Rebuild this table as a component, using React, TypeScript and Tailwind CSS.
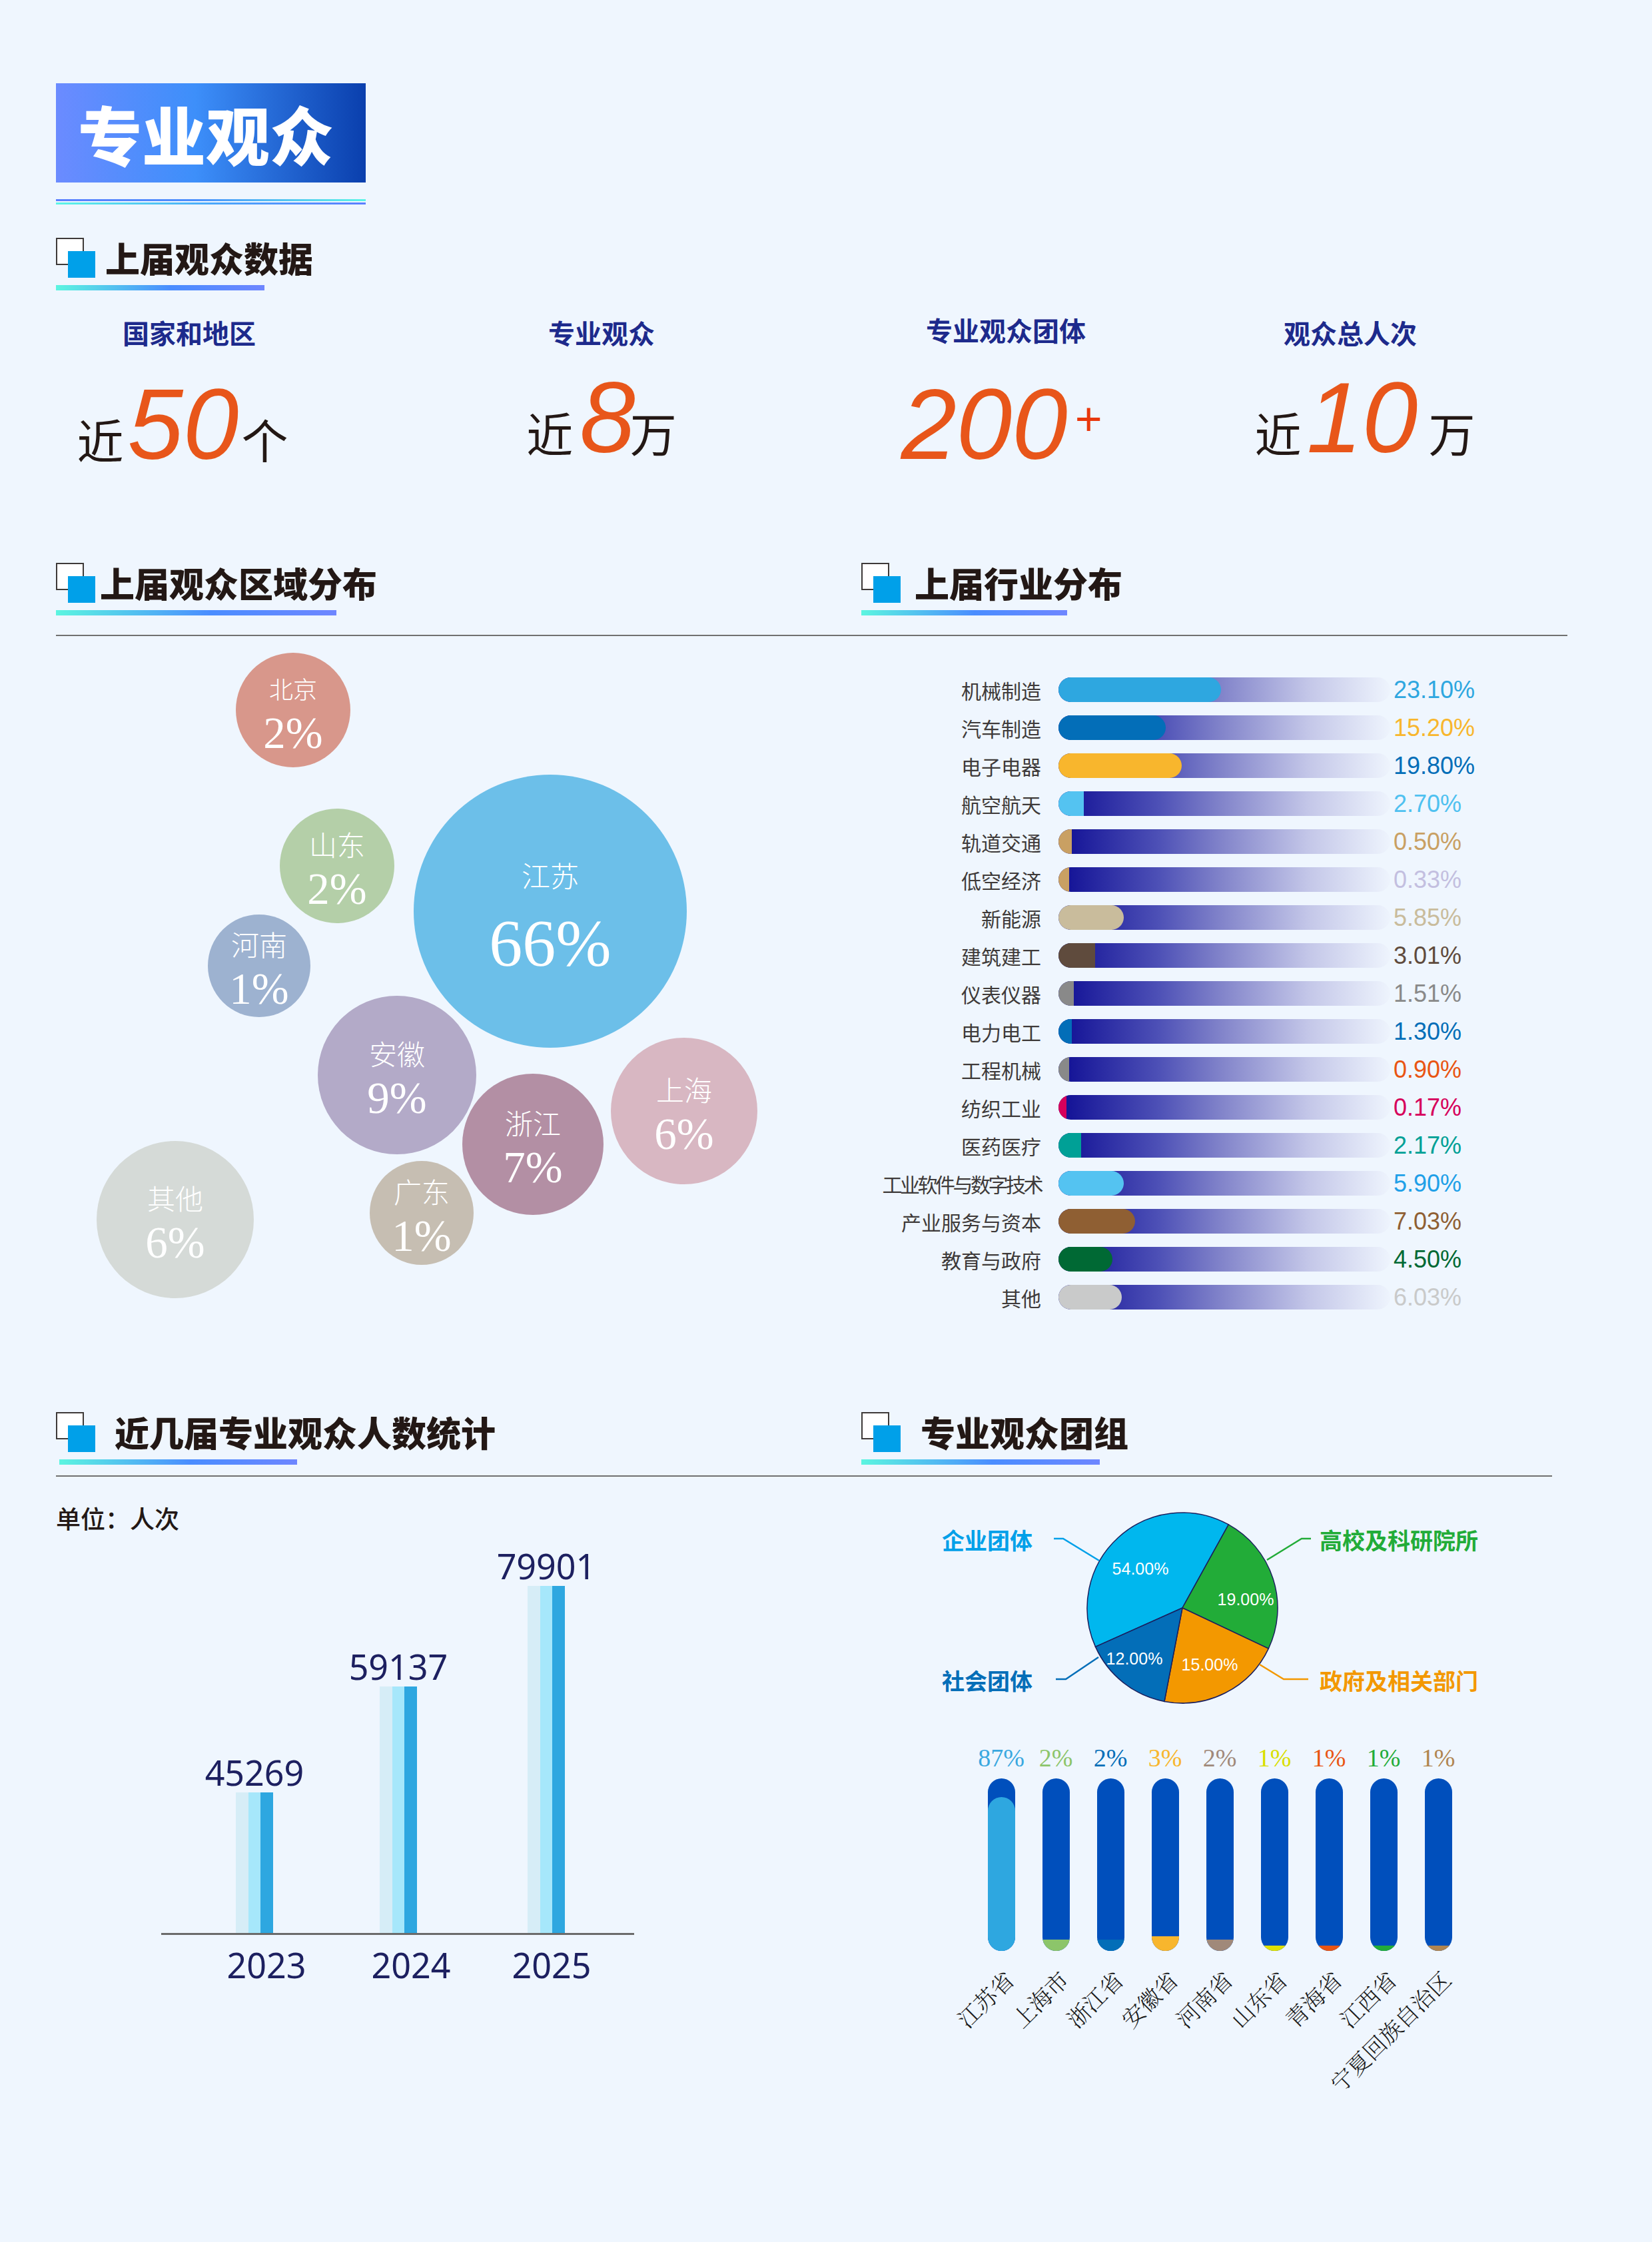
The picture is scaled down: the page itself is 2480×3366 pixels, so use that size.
import React from "react";

// 上届行业分布 rows
const industries = [
  { name: "机械制造", w: 244, fill: "bg-[#2ea7e0]", text: "text-[#2ea7e0]", value: "23.10%" },
  { name: "汽车制造", w: 161, fill: "bg-[#036eb8]", text: "text-[#f8b62d]", value: "15.20%" },
  { name: "电子电器", w: 185, fill: "bg-[#f8b62d]", text: "text-[#036eb8]", value: "19.80%" },
  { name: "航空航天", w: 38, fill: "bg-[#54c3f1]", text: "text-[#4fc1f0]", value: "2.70%" },
  { name: "轨道交通", w: 20, fill: "bg-[#c9a063]", text: "text-[#c9a063]", value: "0.50%" },
  { name: "低空经济", w: 16, fill: "bg-[#c9a063]", text: "text-[#c3bfe0]", value: "0.33%" },
  { name: "新能源", w: 98, fill: "bg-[#c9bc9c]", text: "text-[#c9bc9c]", value: "5.85%" },
  { name: "建筑建工", w: 55, fill: "bg-[#5f4b3d]", text: "text-[#5f4b3d]", value: "3.01%" },
  { name: "仪表仪器", w: 23, fill: "bg-[#898989]", text: "text-[#898989]", value: "1.51%" },
  { name: "电力电工", w: 20, fill: "bg-[#036eb8]", text: "text-[#036eb8]", value: "1.30%" },
  { name: "工程机械", w: 16, fill: "bg-[#898989]", text: "text-[#e95513]", value: "0.90%" },
  { name: "纺织工业", w: 12, fill: "bg-[#d6005b]", text: "text-[#d6005b]", value: "0.17%" },
  { name: "医药医疗", w: 34, fill: "bg-[#00a096]", text: "text-[#00a096]", value: "2.17%" },
  { name: "工业软件与数字技术", w: 98, fill: "bg-[#54c3f1]", text: "text-[#1fa0e8]", value: "5.90%", tight: true },
  { name: "产业服务与资本", w: 115, fill: "bg-[#8f5f33]", text: "text-[#8f5f33]", value: "7.03%" },
  { name: "教育与政府", w: 81, fill: "bg-[#006934]", text: "text-[#006934]", value: "4.50%" },
  { name: "其他", w: 95, fill: "bg-[#c9caca]", text: "text-[#c9caca]", value: "6.03%" },
];

// 区域分布 bubbles, positions relative to the canvas
const bubbles = [
  { name: "北京", pct: "2%", x: 270, y: 25, d: 172, bg: "bg-[#d8978b]", small: true },
  { name: "山东", pct: "2%", x: 336, y: 259, d: 172, bg: "bg-[#b4cfa8]" },
  { name: "河南", pct: "1%", x: 228, y: 418, d: 154, bg: "bg-[#9db2d0]" },
  { name: "安徽", pct: "9%", x: 393, y: 540, d: 238, bg: "bg-[#b3aac8]" },
  { name: "浙江", pct: "7%", x: 610, y: 657, d: 212, bg: "bg-[#b38fa4]" },
  { name: "上海", pct: "6%", x: 833, y: 603, d: 220, bg: "bg-[#d8b7c2]" },
  { name: "广东", pct: "1%", x: 471, y: 788, d: 156, bg: "bg-[#c6beb2]" },
  { name: "其他", pct: "6%", x: 61, y: 758, d: 236, bg: "bg-[#d5dad7]" },
];

// 人数统计 bars
const years = [
  { year: "2023", value: "45269", h: 211, ml: "ml-[40px]" },
  { year: "2024", value: "59137", h: 370, ml: "ml-[16px]" },
  { year: "2025", value: "79901", h: 521, ml: "ml-[22px]" },
];

// 省份团组
const provinces = [
  { name: "江苏省", pct: "87%", text: "text-[#3aa8e0]", fill: "bg-[#2ea7e0] rounded-t-full", h: 231 },
  { name: "上海市", pct: "2%", text: "text-[#8cc56a]", fill: "bg-[#8cc56a]", h: 17 },
  { name: "浙江省", pct: "2%", text: "text-[#036eb8]", fill: "bg-[#036eb8]", h: 17 },
  { name: "安徽省", pct: "3%", text: "text-[#f8b62d]", fill: "bg-[#f8b62d]", h: 22 },
  { name: "河南省", pct: "2%", text: "text-[#a0897a]", fill: "bg-[#a0897a]", h: 17 },
  { name: "山东省", pct: "1%", text: "text-[#d9df00]", fill: "bg-[#dfe000]", h: 8 },
  { name: "青海省", pct: "1%", text: "text-[#e95513]", fill: "bg-[#e95513]", h: 8 },
  { name: "江西省", pct: "1%", text: "text-[#22ac38]", fill: "bg-[#22ac38]", h: 8 },
  { name: "宁夏回族自治区", pct: "1%", text: "text-[#b08550]", fill: "bg-[#b08550]", h: 8 },
];

function SectionTitle({ title, gapClass, lineClass }: { title: string; gapClass: string; lineClass: string }) {
  return (
    <div className="flex flex-col">
      <div className="flex h-[60px] items-center">
        <svg width="59" height="60" viewBox="0 0 59 60" className="shrink-0">
          <rect x="1" y="1" width="40" height="39" fill="#ffffff" stroke="#3e3a39" strokeWidth="2" />
          <rect x="18" y="20" width="41" height="40" fill="#00a0e9" />
        </svg>
        <span className={`${gapClass} text-[52px] leading-none font-black text-[#231815]`}>{title}</span>
      </div>
      <div className={`mt-[11px] h-[8px] ${lineClass} bg-[linear-gradient(90deg,#5cf5e0_0%,#4a8dff_55%,#6e86ff_100%)]`} />
    </div>
  );
}

function PieChart() {
  const label = "font-['Liberation_Sans',sans-serif]";
  return (
    <svg width="840" height="320" viewBox="0 0 840 320" className="ml-[107px] mt-[43px] block">
      <path d="M375,154 L244.5,212.4 A143,143 0 0 1 444.3,28.9 Z" fill="#00b7ee" stroke="#1b1f5e" strokeWidth="1.5" />
      <path d="M375,154 L444.3,28.9 A143,143 0 0 1 504.3,215.1 Z" fill="#22ac38" stroke="#1b1f5e" strokeWidth="1.5" />
      <path d="M375,154 L504.3,215.1 A143,143 0 0 1 348,294.4 Z" fill="#f39800" stroke="#1b1f5e" strokeWidth="1.5" />
      <path d="M375,154 L348,294.4 A143,143 0 0 1 244.5,212.4 Z" fill="#036eb8" stroke="#1b1f5e" strokeWidth="1.5" />
      <g className={label} fill="#ffffff" fontSize="25" textAnchor="middle" dominantBaseline="central">
        <text x="312" y="95">54.00%</text>
        <text x="470" y="141">19.00%</text>
        <text x="303" y="230">12.00%</text>
        <text x="416" y="239">15.00%</text>
      </g>
      <g fill="none" strokeWidth="2.5">
        <polyline points="182,50 196,50 250,83" stroke="#00a0e9" />
        <polyline points="185,261 200,261 249,228" stroke="#036eb8" />
        <polyline points="568,50 554,50 502,82" stroke="#22ac38" />
        <polyline points="564,261 527,261 491,239" stroke="#f39800" />
      </g>
      <g fontFamily="'Noto Sans CJK SC', sans-serif" fontSize="34" fontWeight="700" dominantBaseline="central">
        <text x="14" y="51" fill="#00a0e9">企业团体</text>
        <text x="14" y="262" fill="#036eb8">社会团体</text>
        <text x="581" y="51" fill="#22ac38">高校及科研院所</text>
        <text x="581" y="262" fill="#f39800">政府及相关部门</text>
      </g>
    </svg>
  );
}

export default function App() {
  return (
    <div className="min-h-[3366px] w-[2480px] bg-[#eff6fe] pl-[84px] pt-[125px] font-['Noto_Sans_CJK_SC','Noto_Sans',sans-serif] text-[#231815]">
      {/* Banner */}
      <div className="flex h-[149px] w-[465px] items-center bg-[linear-gradient(90deg,#6b8bff_0%,#3d8ffa_45%,#0a3fad_100%)] pl-[33px]">
        <span className="text-[96px] leading-none font-black text-white">专业观众</span>
      </div>
      <div className="mt-[25px] w-[465px]">
        <div className="h-[3px] bg-[linear-gradient(90deg,#5b7fff,#4a8ffd_45%,#5cf5e6)]" />
        <div className="mt-[2px] h-[3px] bg-[linear-gradient(90deg,#5cf5e6,#4aa8fb_50%,#5b7fff)]" />
      </div>

      {/* 上届观众数据 */}
      <div className="mt-[50px]">
        <SectionTitle title="上届观众数据" gapClass="ml-[15px]" lineClass="w-[313px]" />
      </div>

      <div className="mt-[43px] flex items-start">
        <div className="flex w-[400px] flex-col items-center">
          <span className="text-[40px] leading-[40px] font-bold text-[#1d2a8c]">国家和地区</span>
          <div className="mr-[20px] mt-[43px] flex items-baseline leading-none">
            <span className="text-[70px]">近</span>
            <span className="ml-[6px] font-['Liberation_Sans',sans-serif] text-[150px] italic text-[#e8561a]">50</span>
            <span className="ml-[4px] text-[70px]">个</span>
          </div>
        </div>
        <div className="ml-[219px] flex w-[400px] flex-col items-center">
          <span className="text-[40px] leading-[40px] font-bold text-[#1d2a8c]">专业观众</span>
          <div className="mt-[33px] flex items-baseline leading-none">
            <span className="text-[70px]">近</span>
            <span className="ml-[10px] font-['Liberation_Sans',sans-serif] text-[150px] italic text-[#e8561a]">8</span>
            <span className="-ml-[8px] text-[70px]">万</span>
          </div>
        </div>
        <div className="ml-[207px] flex w-[400px] flex-col items-center">
          <span className="-mt-[4px] mb-[4px] text-[40px] leading-[40px] font-bold text-[#1d2a8c]">专业观众团体</span>
          <div className="mr-[14px] mt-[43px] flex items-baseline leading-none">
            <span className="font-['Liberation_Sans',sans-serif] text-[150px] italic text-[#e8561a]">200</span>
            <span className="ml-[10px] mt-[32px] self-start font-['Liberation_Sans',sans-serif] text-[70px] font-light italic text-[#e8380d]">+</span>
          </div>
        </div>
        <div className="ml-[117px] flex w-[400px] flex-col items-center">
          <span className="text-[40px] leading-[40px] font-bold text-[#1d2a8c]">观众总人次</span>
          <div className="ml-[44px] mt-[33px] flex items-baseline leading-none">
            <span className="text-[70px]">近</span>
            <span className="ml-[8px] font-['Liberation_Sans',sans-serif] text-[150px] italic text-[#e8561a]">10</span>
            <span className="ml-[16px] text-[70px]">万</span>
          </div>
        </div>
      </div>

      {/* 区域分布 + 行业分布 */}
      <div className="mt-[133px] flex">
        <div className="w-[1209px]">
          <SectionTitle title="上届观众区域分布" gapClass="ml-[7px]" lineClass="w-[421px]" />
        </div>
        <SectionTitle title="上届行业分布" gapClass="ml-[21px]" lineClass="w-[309px]" />
      </div>
      <div className="mt-[29px] h-[2px] w-[2269px] bg-[#707070]" />

      <div className="flex h-[1165px]">
        <div className="relative w-[1209px]">
          {/* 江苏 */}
          <div className="absolute left-[537px] top-[208px] flex h-[410px] w-[410px] flex-col items-center justify-center gap-[31px] rounded-full bg-[#6cbfe9] pt-[21px] text-white">
            <span className="text-[43px] leading-none font-light">江苏</span>
            <span className="font-['Liberation_Serif',serif] text-[100px] leading-none">66%</span>
          </div>
          {bubbles.map((b) => (
            <div
              key={b.name}
              className={`absolute flex flex-col items-center justify-center gap-[13px] rounded-full pt-[13px] text-white ${b.bg}`}
              style={{ left: b.x, top: b.y, width: b.d, height: b.d }}
            >
              <span className={b.small ? "text-[36px] leading-[42px] font-light" : "text-[42px] leading-none font-light"}>{b.name}</span>
              <span className="font-['Liberation_Serif',serif] text-[67px] leading-none">{b.pct}</span>
            </div>
          ))}
        </div>

        <div className="pt-[52px]">
          {industries.map((r) => (
            <div key={r.name} className="flex h-[57px] items-center">
              <span
                className={`w-[270px] whitespace-nowrap text-right text-[30px] leading-none text-[#3e3a39] ${r.tight ? "tracking-[-3.5px]" : ""}`}
              >
                {r.name}
              </span>
              <div className="ml-[26px] flex h-[37px] w-[498px] overflow-hidden rounded-full bg-[linear-gradient(90deg,#0f0e94_0%,#4d50b6_30%,#8486cb_50%,#c3c6e8_75%,#eef4fd_100%)]">
                <div className={`h-full ${r.fill} ${r.w >= 60 ? "rounded-r-full" : ""}`} style={{ width: r.w }} />
              </div>
              <span className={`ml-[5px] font-['Liberation_Sans',sans-serif] text-[36px] leading-none ${r.text}`}>{r.value}</span>
            </div>
          ))}
        </div>
      </div>

      {/* 人数统计 + 团组 */}
      <div className="flex">
        <div className="w-[1209px]">
          <SectionTitle title="近几届专业观众人数统计" gapClass="ml-[29px]" lineClass="ml-[5px] w-[357px]" />
        </div>
        <SectionTitle title="专业观众团组" gapClass="ml-[30px]" lineClass="w-[358px]" />
      </div>
      <div className="mt-[16px] h-[2px] w-[2246px] bg-[#707070]" />

      <div className="flex">
        <div className="w-[1209px]">
          <div className="mt-[44px] text-[37px] leading-[37px] font-medium">单位：人次</div>
          <div className="ml-[158px] mt-[27px] w-[710px]">
            <div className="flex h-[577px] items-end">
              {years.map((y) => (
                <div key={y.year} className={`flex w-[200px] flex-col items-center ${y.ml}`}>
                  <span className="font-['Noto_Sans',sans-serif] text-[52px] leading-none text-[#1d2060]">{y.value}</span>
                  <div className="mt-[4px] flex w-[56px]" style={{ height: y.h }}>
                    <div className="flex-1 bg-[#d6edf7]" />
                    <div className="flex-1 bg-[#a6e7fb]" />
                    <div className="flex-1 bg-[#2ea7e0]" />
                  </div>
                </div>
              ))}
            </div>
            <div className="h-[3px] w-[710px] bg-[#6b6b6b]" />
            <div className="mt-[19px] flex">
              <span className="ml-[58px] w-[200px] text-center font-['Noto_Sans',sans-serif] text-[52px] leading-none text-[#1d2060]">2023</span>
              <span className="ml-[17px] w-[200px] text-center font-['Noto_Sans',sans-serif] text-[52px] leading-none text-[#1d2060]">2024</span>
              <span className="ml-[11px] w-[200px] text-center font-['Noto_Sans',sans-serif] text-[52px] leading-none text-[#1d2060]">2025</span>
            </div>
          </div>
        </div>

        <div>
          <PieChart />
          <div className="ml-[169px] mt-[40px] flex">
            {provinces.map((p) => (
              <div key={p.name} className="flex w-[82px] flex-col items-center">
                <span className={`font-['Liberation_Serif',serif] text-[38px] leading-none ${p.text}`}>{p.pct}</span>
                <div className="mt-[12px] flex h-[259px] w-[41px] flex-col justify-end overflow-hidden rounded-full bg-[#004fbc]">
                  <div className={p.fill} style={{ height: p.h }} />
                </div>
                <div className="relative h-0 w-full">
                  <span className="absolute right-[41px] top-[24px] origin-top-right -rotate-45 whitespace-nowrap font-['Noto_Serif_CJK_SC','Noto_Sans_CJK_SC',serif] text-[34px] leading-none font-light text-[#1a1a1a]">
                    {p.name}
                  </span>
                </div>
              </div>
            ))}
          </div>
        </div>
      </div>
    </div>
  );
}
